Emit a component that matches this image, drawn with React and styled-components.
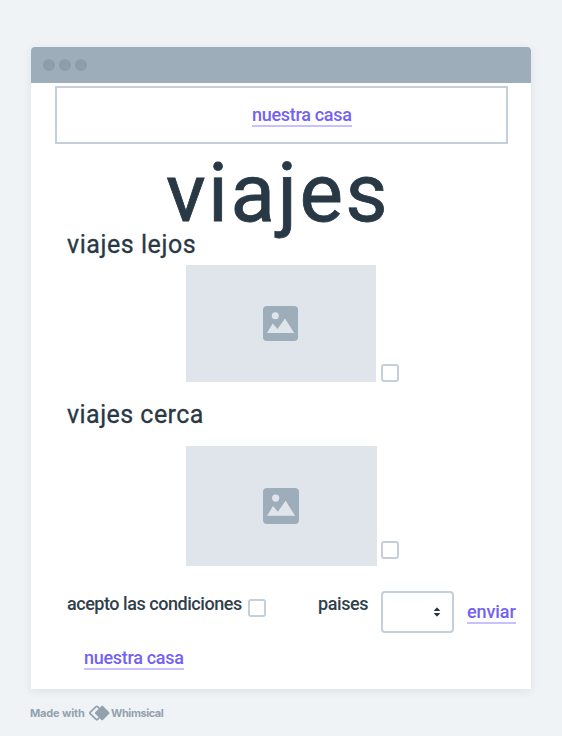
import React from "react";
import styled, { createGlobalStyle } from "styled-components";

const GlobalStyle = createGlobalStyle`
  * { box-sizing: border-box; }
  body {
    margin: 0;
    background: #eff3f6;
    color: #293845;
    font-family: Roboto, "Liberation Sans", sans-serif;
  }
`;

const Page = styled.div`
  height: 736px;
  padding: 47px 31px 0;
  overflow: hidden;
`;

const BrowserWindow = styled.main`
  width: 500px;
  height: 642px;
  background: #fff;
  border-radius: 4px 4px 0 0;
  box-shadow: 0 2px 10px rgba(41, 56, 69, 0.09);
`;

const TitleBar = styled.header`
  display: flex;
  align-items: center;
  gap: 4px;
  height: 36px;
  padding-left: 12px;
  background: #9eadba;
  border-radius: 4px 4px 0 0;
`;

const Dot = styled.span`
  width: 12px;
  height: 12px;
  border-radius: 50%;
  background: #8d9dab;
`;

const Nav = styled.nav`
  display: flex;
  align-items: flex-start;
  width: 453px;
  height: 58px;
  margin: 3px 0 0 24px;
  padding: 16px 0 0 195px;
  border: 2px solid #c4cfda;
`;

const Link = styled.a`
  display: block;
  width: ${(p) => p.$width}px;
  height: 23px;
  color: #7362f2;
  border-bottom: 2px solid #c9c1fb;
  font-size: 18px;
  font-weight: 500;
  line-height: 21px;
  letter-spacing: ${(p) => p.$spacing}px;
  white-space: nowrap;
`;

const Title = styled.h1`
  height: 84px;
  margin: 0;
  padding-left: 135px;
  font-size: 82px;
  font-weight: 400;
  line-height: 99px;
  letter-spacing: 2.4px;
  -webkit-text-stroke: 0.8px #293845;
`;

const Section = styled.section`
  display: flex;
  flex-direction: column;
  height: ${(p) => p.$height}px;
  padding-left: 36px;
`;

const Heading = styled.h2`
  height: ${(p) => p.$height}px;
  margin: 0;
  font-size: 25px;
  font-weight: 400;
  line-height: 34px;
  letter-spacing: ${(p) => p.$spacing}px;
  -webkit-text-stroke: 0.3px #293845;
`;

const Media = styled.div`
  display: flex;
  align-items: flex-end;
  padding-left: 119px;
`;

const Placeholder = styled.div`
  display: flex;
  align-items: center;
  justify-content: center;
  width: ${(p) => p.$width}px;
  height: ${(p) => p.$height}px;
  padding-right: 1px;
  background: #e0e5ec;
`;

const Checkbox = styled.span`
  flex: none;
  width: 18px;
  height: 18px;
  margin: ${(p) => p.$margin};
  border: 2px solid #c4cfda;
  border-radius: 3px;
  background: #fff;
`;

const Form = styled.form`
  display: flex;
  align-items: flex-start;
  height: 56px;
  padding-left: 36px;
`;

const Label = styled.label`
  width: ${(p) => p.$width}px;
  margin-top: 1px;
  color: #303f4b;
  font-size: 18px;
  font-weight: 500;
  line-height: 24px;
  letter-spacing: ${(p) => p.$spacing}px;
  white-space: nowrap;
`;

const Select = styled.div`
  display: flex;
  align-items: center;
  justify-content: flex-end;
  width: 73px;
  height: 42px;
  margin-right: 13px;
  padding-right: 11px;
  border: 2px solid #c4cfda;
  border-radius: 4px;
`;

const Submit = styled.div`
  padding-top: 10px;
`;

const Bottom = styled.div`
  padding-left: 53px;
`;

const Credit = styled.footer`
  display: flex;
  align-items: center;
  height: 16px;
  margin: 16px 0 0 -1px;
  color: #93a1ae;
  font-family: Inter, "Liberation Sans", sans-serif;
  font-size: 11px;
  font-weight: 700;
  line-height: 16px;
`;

const CreditText = styled.span`
  width: ${(p) => p.$width}px;
  letter-spacing: ${(p) => p.$spacing}px;
  white-space: nowrap;
`;

const ImageIcon = ({ size }) => (
  <svg width={size} height={size} viewBox="0 0 35 35">
    <rect width="35" height="35" rx="4" fill="#9eadba" />
    <circle cx="12.3" cy="9.8" r="3.5" fill="#e0e5ec" />
    <path d="M4 27 9.7 17.6 14.5 23 22 12.4 31.2 27Z" fill="#e0e5ec" />
  </svg>
);

const SortIcon = () => (
  <svg width="8" height="10" viewBox="0 0 8 10">
    <path
      d="M4 .8 6.6 3.5H1.4ZM4 9.2 6.6 6.5H1.4Z"
      fill="#293845"
      stroke="#293845"
      strokeWidth="1"
      strokeLinejoin="round"
    />
  </svg>
);

const Logo = () => (
  <svg width="23" height="16" viewBox="0 0 23 16">
    <path
      d="M11.2 3.3 9.5 1.6Q8.8.9 8.1 1.6L2.1 7.4Q1.5 8 2.1 8.6L8.1 14.4Q8.8 15.1 9.5 14.4L11.2 12.7"
      fill="none"
      stroke="#93a1ae"
      strokeWidth="1.7"
    />
    <path
      d="M13.4.9Q14.2.1 15 .9L21.2 7.2Q22 8 21.2 8.8L15 15.1Q14.2 15.9 13.4 15.1L7.2 8.8Q6.4 8 7.2 7.2Z"
      fill="#93a1ae"
    />
  </svg>
);

export default function App() {
  return (
    <>
      <GlobalStyle />
      <Page>
        <BrowserWindow>
          <TitleBar>
            <Dot />
            <Dot />
            <Dot />
          </TitleBar>
          <Nav>
            <Link $width={100} $spacing={-0.3}>nuestra casa</Link>
          </Nav>
          <Title>viajes</Title>
          <Section $height={170}>
            <Heading $height={37} $spacing={0.55}>viajes lejos</Heading>
            <Media>
              <Placeholder $width={190} $height={117}>
                <ImageIcon size={35} />
              </Placeholder>
              <Checkbox $margin="0 0 0 5px" />
            </Media>
          </Section>
          <Section $height={193}>
            <Heading $height={48} $spacing={0.46}>viajes cerca</Heading>
            <Media>
              <Placeholder $width={191} $height={120}>
                <ImageIcon size={36} />
              </Placeholder>
              <Checkbox $margin="0 0 7px 4px" />
            </Media>
          </Section>
          <Form>
            <Label $width={181} $spacing={-0.46}>acepto las condiciones</Label>
            <Checkbox $margin="8px 52px 0 0" />
            <Label $width={63} $spacing={-0.4}>paises</Label>
            <Select>
              <SortIcon />
            </Select>
            <Submit>
              <Link $width={49} $spacing={-0.1}>enviar</Link>
            </Submit>
          </Form>
          <Bottom>
            <Link $width={100} $spacing={-0.3}>nuestra casa</Link>
          </Bottom>
        </BrowserWindow>
        <Credit>
          <CreditText $width={58} $spacing={-0.15}>Made with</CreditText>
          <Logo />
          <CreditText $width={56} $spacing={-0.45}>Whimsical</CreditText>
        </Credit>
      </Page>
    </>
  );
}
